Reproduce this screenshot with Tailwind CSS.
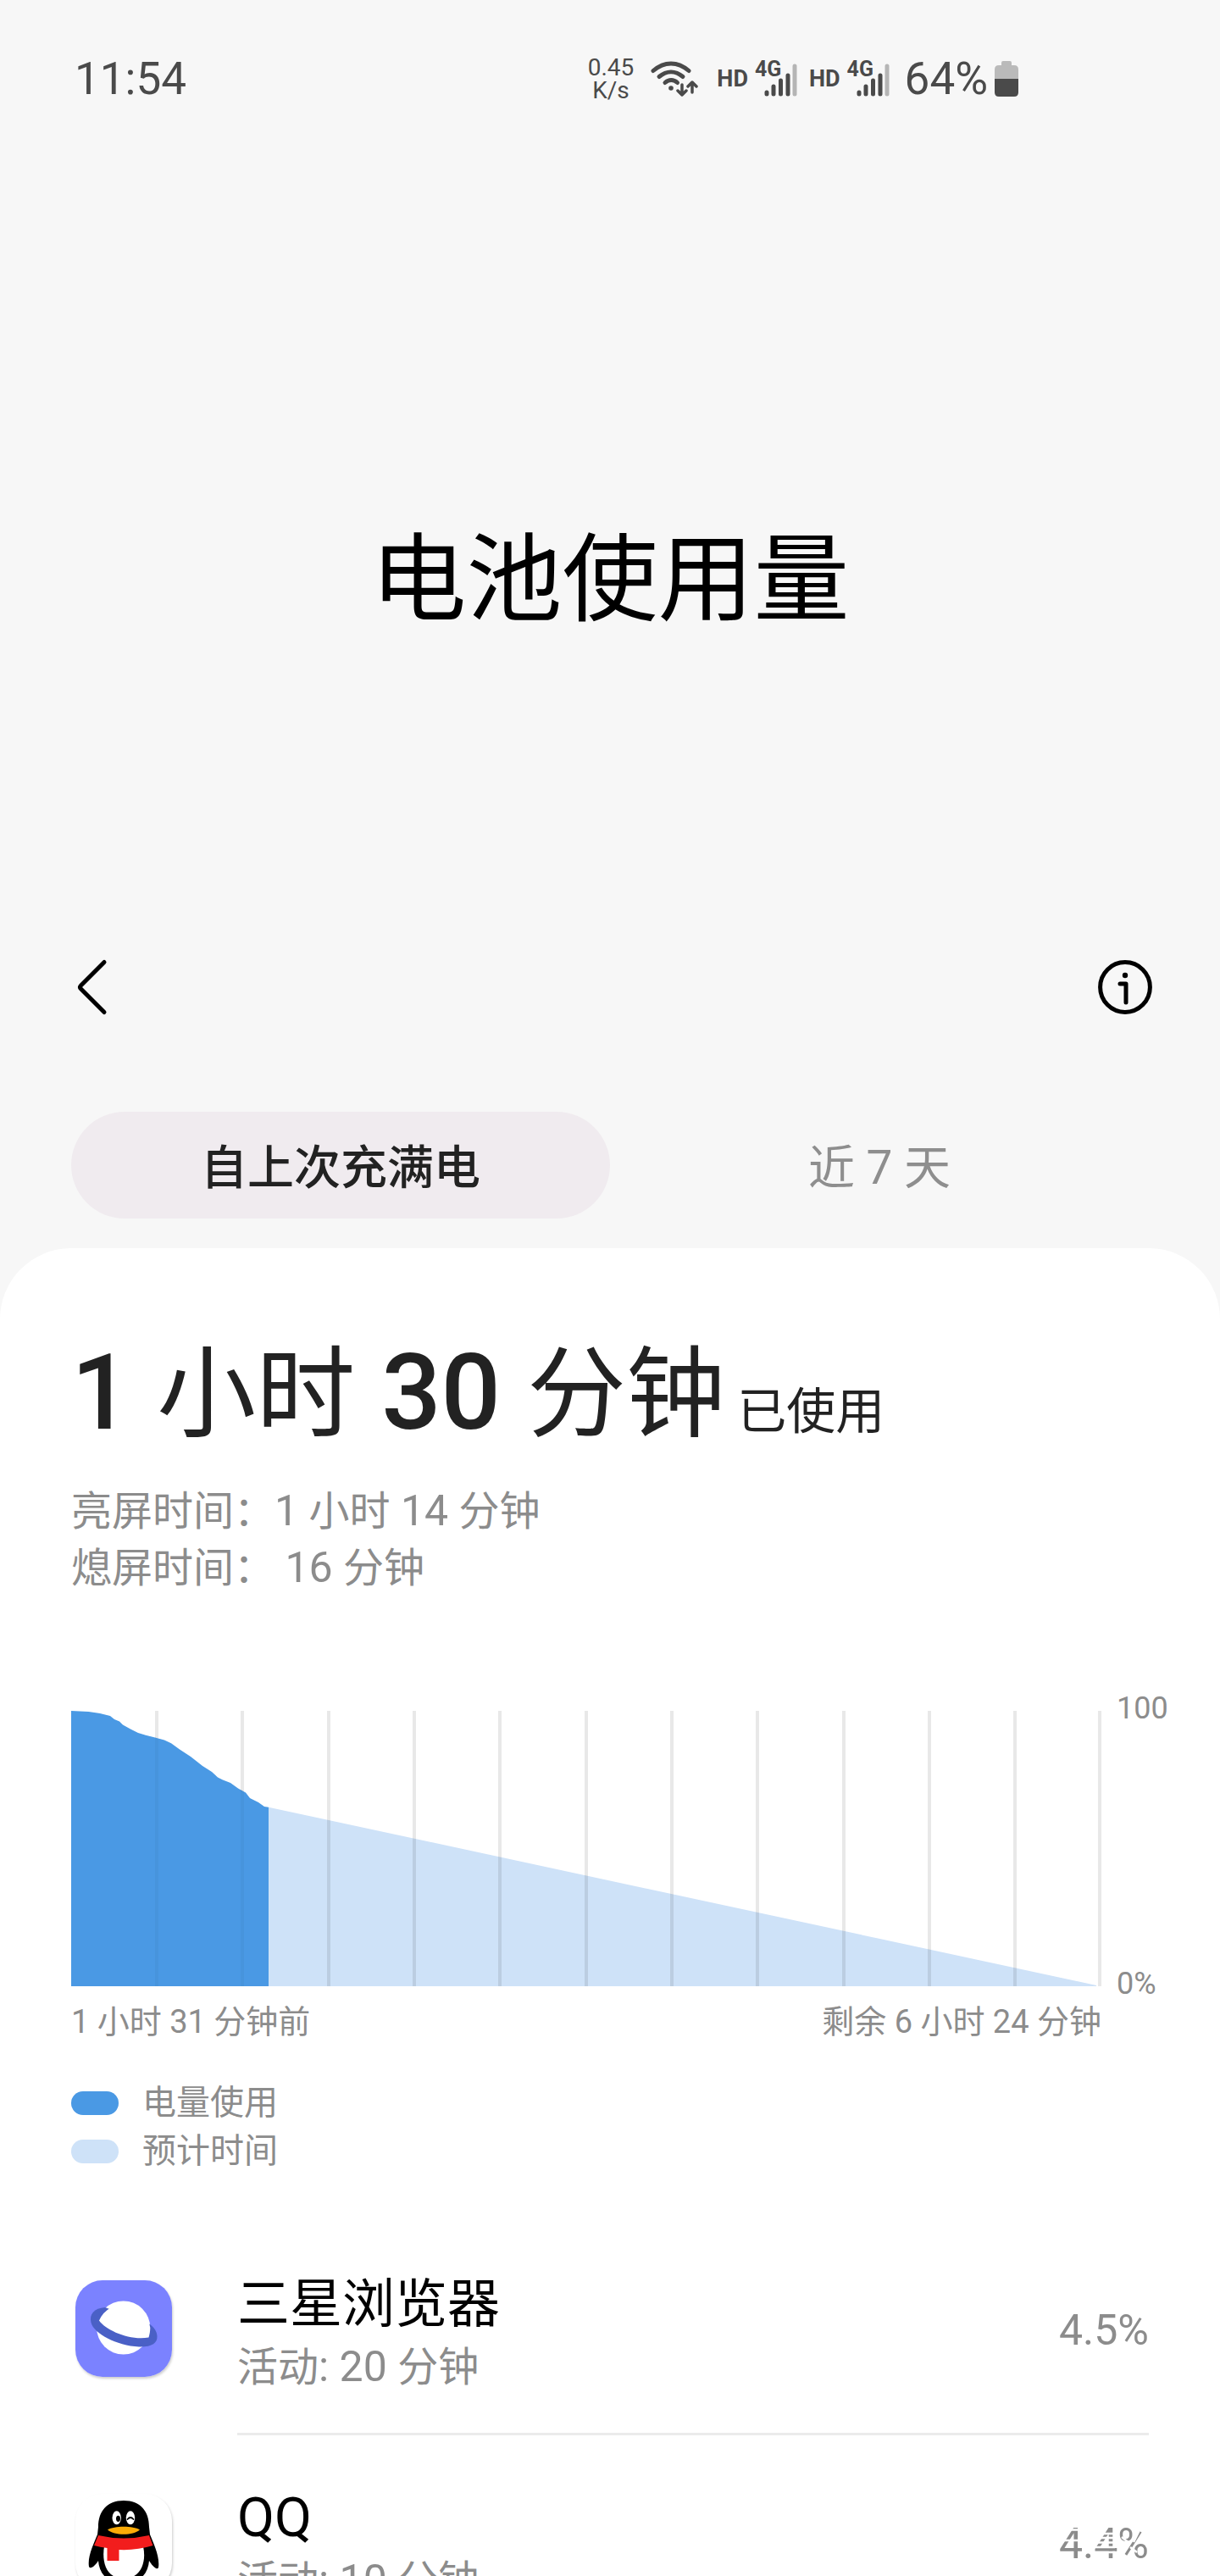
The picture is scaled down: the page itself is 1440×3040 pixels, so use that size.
<!DOCTYPE html>
<html lang="zh-CN">
<head>
    <meta charset="UTF-8">
    <meta name="viewport" content="width=device-width, initial-scale=1.0">
    <title>电池使用量</title>
    <script src="https://cdn.jsdelivr.net/npm/@tailwindcss/browser@4"></script>
</head>
<body class="bg-[#f7f7f7] font-[Roboto,'Noto_Sans_CJK_SC',sans-serif] text-black">
<div class="flex flex-col h-screen overflow-hidden">

    <!-- Status bar -->
    <div class="flex items-center shrink-0 h-[126px] pt-[60px] pl-[88px] pr-[238px] text-[#4a4a4a]">
        <span class="text-[53px] leading-none">11:54</span>
        <div class="flex items-center ml-auto">
            <div class="flex flex-col items-center mr-[20px] text-[28px] leading-[27px]">
                <span>0.45</span>
                <span>K/s</span>
            </div>
            <svg class="w-[58px] h-[42px] mr-[20px]" viewBox="0 0 58 42" fill="none" stroke="currentColor" stroke-width="5" stroke-linecap="round" stroke-linejoin="round">
                <path d="M3 11.500C16 0 32 0 45 11.500"/>
                <path d="M10 18.500C19 11 29 11 38 18.500"/>
                <path d="M17 25.500C21.500 21.500 27 21.500 31.500 25.500"/>
                <circle cx="24" cy="32" r="2.800" fill="currentColor" stroke="none"/>
                <path stroke-width="3.500" d="M37 28V40M32 35L37 40L42 35M49 37V25M44 30L49 25L54 30"/>
            </svg>
            <span class="text-[27px] leading-none font-bold mr-[8px]">HD</span>
            <div class="relative w-[50px] h-[42px] mr-[14px]">
                <span class="absolute left-0 top-0 text-[25px] leading-[20px] font-bold">4G</span>
                <svg class="w-full h-full" viewBox="0 0 50 42" fill="none" stroke="currentColor" stroke-width="5" stroke-linecap="round">
                    <path d="M14 37V39M22 30V39M30.500 23V39M39 17V39"/>
                    <path stroke="#b5b5b5" d="M47 6V39"/>
                </svg>
            </div>
            <span class="text-[27px] leading-none font-bold mr-[8px]">HD</span>
            <div class="relative w-[50px] h-[42px] mr-[18px]">
                <span class="absolute left-0 top-0 text-[25px] leading-[20px] font-bold">4G</span>
                <svg class="w-full h-full" viewBox="0 0 50 42" fill="none" stroke="currentColor" stroke-width="5" stroke-linecap="round">
                    <path d="M14 37V39M22 30V39M30.500 23V39M39 17V39"/>
                    <path stroke="#b5b5b5" d="M47 6V39"/>
                </svg>
            </div>
            <span class="text-[53px] leading-none mr-[8px]">64%</span>
            <svg class="w-[28px] h-[42px]" viewBox="0 0 28 42">
                <path fill="#bababa" d="M0 21V10Q0 5 5 5H8V2Q8 0 10 0H18Q20 0 20 2V5H23Q28 5 28 10V21Z"/>
                <path fill="currentColor" d="M0 21H28V37Q28 42 23 42H5Q0 42 0 37Z"/>
            </svg>
        </div>
    </div>

    <header class="shrink-0">
        <div class="flex items-center justify-center h-[975px] pt-[142px]">
            <h1 class="text-[113px] leading-none">电池使用量</h1>
        </div>
        <div class="flex items-center justify-between h-[128px] pl-[84px] pr-[80px]">
            <button type="button" aria-label="返回">
                <svg class="w-[48px] h-[68px]" viewBox="0 0 48 68" fill="none" stroke="#000" stroke-width="5" stroke-linecap="round" stroke-linejoin="round">
                    <path d="M39 4.500L11.500 32Q9.500 34 11.500 36L39 63.500"/>
                </svg>
            </button>
            <button type="button" aria-label="信息">
                <svg class="w-[64px] h-[64px]" viewBox="0 0 64 64" fill="none" stroke="#000" stroke-width="5" stroke-linecap="round" stroke-linejoin="round">
                    <circle cx="32" cy="32" r="29.400"/>
                    <path d="M26 28H33V50"/>
                    <circle cx="32" cy="18" r="3.200" fill="#000" stroke="none"/>
                </svg>
            </button>
        </div>
    </header>

    <nav class="grid grid-cols-2 shrink-0 mt-[83px] px-[84px] text-[55px] leading-none">
        <button type="button" class="h-[126px] pt-[7px] rounded-full bg-[#f0ebef] font-medium text-[#222]">自上次充满电</button>
        <button type="button" class="h-[126px] pt-[7px] rounded-full text-[#8e8e8e]">近 7 天</button>
    </nav>

    <main class="grow shrink-0 mt-[35px] pl-[84px] bg-white rounded-t-[84px] text-[#8c8c8c]">

        <h2 class="pt-[91px] text-[117px] leading-[160px] text-[#222]">
            <b class="text-[124px] font-medium">1 </b>小时<b class="text-[124px] font-medium"> 30 </b>分钟<span class="text-[58px]"> 已使用</span>
        </h2>

        <div class="mt-[4px] text-[48px] leading-[67px]">
            <p>亮屏时间：<span class="text-[50px]">1 </span>小时<span class="text-[50px]"> 14 </span>分钟</p>
            <p>熄屏时间：<span class="text-[50px]"> 16 </span>分钟</p>
        </div>

        <!-- Battery level chart -->
        <div class="flex mt-[135px]">
            <svg class="grow min-w-0 h-[325px]" viewBox="0 0 1216 325" preserveAspectRatio="none">
                <path fill="#4a99e4" d="M0 0L20.600 1L34 3L46 6L51 10L57 12.600L61 16.500L70 21.400L79 26L88 28.700L99 31.500L110 34.400L118 38.300L128 45.500L141 54L155 65L166 72L173 78.500L179 81.500L188 85L197 91.500L206 96.400L211 103L221 108L228 113L233 113.700V325H0Z"/>
                <path fill="#cee2f8" d="M233 113.700L1210 324V325H233Z"/>
                <g stroke="#000" stroke-opacity=".09" stroke-width="4">
                    <path stroke-opacity=".03" d="M101 32V325M202 95V325"/>
                    <path d="M101 0V32M202 0V95M304 0V325M405 0V325M506 0V325M608 0V325M709 0V325M810 0V325M912 0V325M1013 0V325M1114 0V325M1214 0V325"/>
                </g>
            </svg>
            <div class="flex flex-col justify-between w-[140px] -mt-[25px] -mb-[19px] pl-[18px] text-[36px] leading-[44px]">
                <span>100</span>
                <span>0%</span>
            </div>
        </div>
        <div class="flex justify-between mt-[16px] mr-[140px] text-[38px] leading-[52px]">
            <span>1 小时 31 分钟前</span>
            <span>剩余 6 小时 24 分钟</span>
        </div>

        <ul class="mt-[41px] text-[40px] leading-[57px]">
            <li class="flex items-center gap-[28px]"><i class="w-[56px] h-[28px] rounded-full bg-[#4a99e4]"></i>电量使用</li>
            <li class="flex items-center gap-[28px]"><i class="w-[56px] h-[28px] rounded-full bg-[#cee2f8]"></i>预计时间</li>
        </ul>

        <ul class="mt-[55px] mr-[84px]">
            <li class="flex items-center h-[252px]">
                <div class="shrink-0 w-[196px] pl-[5px]">
                    <svg class="w-[114px] h-[114px] rounded-[32px] shadow-[1px_2px_3px_#0003]" viewBox="0 0 114 114">
                        <path fill="#7b82ff" d="M0 0H114V114H0Z"/>
                        <circle cx="56.700" cy="56" r="31.600" fill="#fff"/>
                        <path fill="#4a60c6" d="M35 32C22 33 16 40 18.500 50C22 63 48 77 75 78.500C90 79 97 74 96.500 66C96 60 93 56 88 52Z"/>
                        <path fill="#fff" d="M28 47.500C36 59 64 71.500 86.500 67.500C87.600 64 88.300 60 88.300 56A31.600 31.600 0 0 0 28 47.500Z"/>
                    </svg>
                </div>
                <div class="flex items-center grow h-full border-b-[3px] border-[#ebebeb]">
                    <div class="grow pt-[18px]">
                        <h3 class="text-[62px] leading-[76px] text-black">三星浏览器</h3>
                        <p class="text-[48px] leading-[70px]">活动<span class="text-[50px]">: 20 </span>分钟</p>
                    </div>
                    <span class="pt-[8px] text-[50px]">4.5%</span>
                </div>
            </li>
            <li class="flex items-center h-[252px]">
                <div class="shrink-0 w-[196px] pl-[5px]">
                    <svg class="w-[114px] h-[114px] rounded-[32px] shadow-[1px_2px_3px_#0003]" viewBox="0 0 114 114">
                        <path d="M57 8C37 8 27 21 27 39L26 48C22 58 14 74 16 86C18 90 24 84 27 79C28 94 38 106 57 106C76 106 86 94 87 79C90 84 96 91 98 87C100 74 92 58 88 48L87 39C87 21 77 8 57 8Z"/>
                        <path fill="#fff" d="M34 62H80C84 80 78 100 57 100C36 100 31 80 34 62Z"/>
                        <path fill="#f21d1d" d="M27 49Q57 56 87 49L91.500 61Q72 67 51.500 66V79H37.500V64Q29 63 22 61Z"/>
                        <ellipse cx="48.700" cy="28.300" rx="5.200" ry="8" fill="#fff"/>
                        <ellipse cx="65" cy="28.300" rx="5.200" ry="8" fill="#fff"/>
                        <ellipse cx="50.500" cy="29.300" rx="2.500" ry="3.600"/>
                        <path fill="none" stroke="#000" stroke-width="1.800" stroke-linecap="round" d="M61.500 30Q65 26 68.500 30"/>
                        <path fill="#faab07" d="M38 42.500C46 37.500 68 37.500 76 42.500C68 49.500 46 49.500 38 42.500Z"/>
                    </svg>
                </div>
                <div class="flex items-center grow h-full border-b-[3px] border-[#ebebeb]">
                    <div class="grow pt-[18px]">
                        <h3 class="text-[64px] leading-[76px] text-black">QQ</h3>
                        <p class="text-[48px] leading-[70px]">活动<span class="text-[50px]">: 10 </span>分钟</p>
                    </div>
                    <span class="relative pt-[8px] text-[50px]">4.4%
                        <!-- white stamp lying over the figure -->
                        <svg class="absolute right-0 bottom-[18px] w-[106px] h-[40px]" viewBox="0 0 106 40" fill="none" stroke="#fff" stroke-width="2.500">
                            <path d="M0 3.500H24M0 16H26M40 8H66M40 13H66M40 18.500H66M40 24H66M40 30H66M74 12L84 20M96 2L88 18M84 24L92 30M100 10L104 24"/>
                        </svg>
                    </span>
                </div>
            </li>
        </ul>
    </main>
</div>
</body>
</html>
